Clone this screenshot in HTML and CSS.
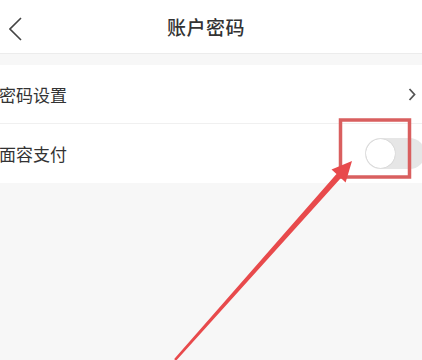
FILE: index.html
```html
<!DOCTYPE html>
<html lang="zh-CN">
<head>
    <meta charset="UTF-8">
    <meta name="viewport" content="width=device-width, initial-scale=1.0">
    <title>账户密码</title>
    <link rel="stylesheet" href="styles.css">
</head>
<body>
    <div class="page">
        <header class="topbar">
            <svg class="back" width="14" height="24" viewBox="0 0 14 24">
                <polyline points="12,1 1,12 12,23" fill="none" stroke="#444" stroke-width="1.6"/>
            </svg>
            <h1 class="title">账户密码</h1>
        </header>

        <div class="list">
            <div class="row">
                <span class="label">密码设置</span>
                <svg class="arrow-right" width="8" height="13" viewBox="0 0 8 13">
                    <polyline points="1.5,1 6.5,6.5 1.5,12" fill="none" stroke="#555" stroke-width="1.8"/>
                </svg>
            </div>
            <div class="row">
                <span class="label">面容支付</span>
                <span class="switch"><span class="knob"></span></span>
            </div>
        </div>
    </div>

    <svg class="annotation" width="422" height="360" viewBox="0 0 422 360">
        <rect x="340.5" y="120" width="69" height="57" fill="none" stroke="#d95f5f" stroke-width="3.5"/>
        <polygon points="352,161 345.6,182.5 340.9,178 175.8,361 174.2,359 336.5,174 331.5,169.5" fill="#e84a4c"/>
    </svg>
</body>
</html>
```

FILE: styles.css
```css
body {
    margin: 0;
    background: #f7f7f7;
    font-family: "Noto Sans CJK SC", "Noto Sans", sans-serif;
    color: #333;
}
.page {
    width: 422px;
    height: 360px;
    overflow: hidden;
}
.topbar {
    height: 54px;
    background: #fff;
    border-bottom: 1px solid #ececec;
    display: flex;
    align-items: center;
    justify-content: center;
    position: relative;
    box-sizing: border-box;
}
.back {
    position: absolute;
    left: 9px;
    top: 17px;
}
.title {
    margin: 0 0 0 -10px;
    font-size: 19px;
    font-weight: 500;
    color: #333;
    letter-spacing: 0.5px;
}
.list {
    margin-top: 11px;
    background: #fff;
}
.row {
    height: 59px;
    display: flex;
    align-items: center;
    justify-content: space-between;
    border-bottom: 1px solid #f0f0f0;
    box-sizing: border-box;
}
.row:last-child {
    border-bottom: none;
}
.label {
    font-size: 17px;
    color: #333;
    margin-left: -1px;
}
.arrow-right {
    margin-right: 6px;
}
.switch {
    width: 60px;
    height: 31px;
    border-radius: 16px;
    background: #e6e6e6;
    margin-right: -3px;
    display: flex;
    align-items: center;
    padding-left: 1px;
    box-sizing: border-box;
}
.knob {
    width: 29px;
    height: 29px;
    border-radius: 50%;
    background: #fff;
    box-shadow: 0 0 1px rgba(0, 0, 0, 0.3);
}
.annotation {
    position: absolute;
    left: 0;
    top: 0;
}
```
